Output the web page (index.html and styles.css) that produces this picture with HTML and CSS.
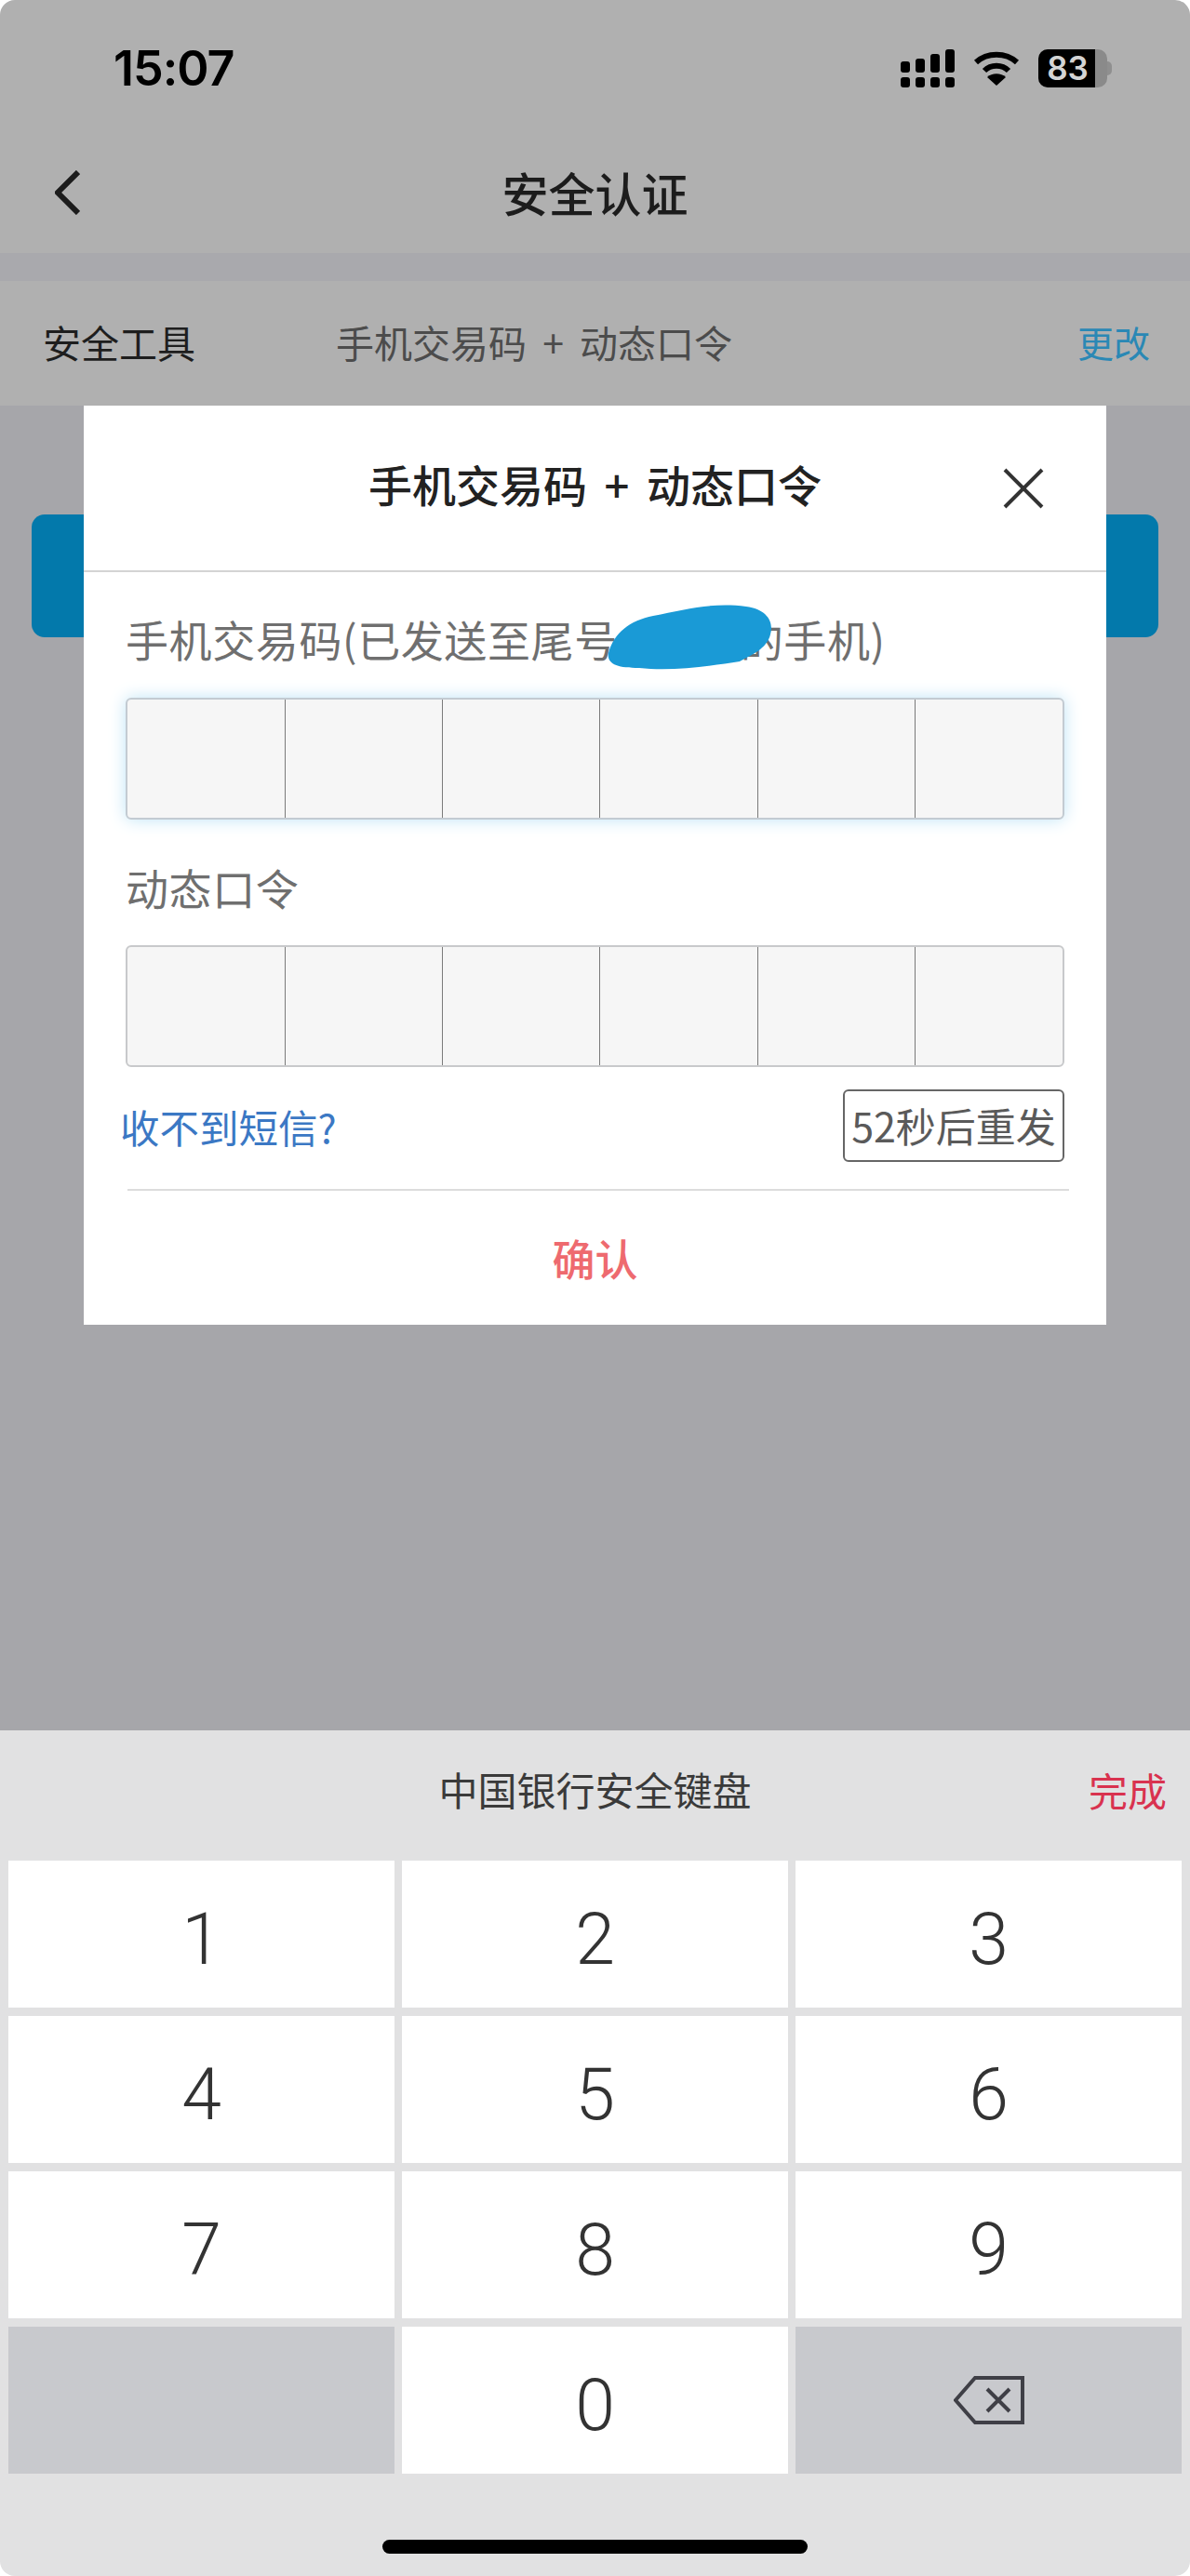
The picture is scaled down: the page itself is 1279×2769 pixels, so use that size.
FILE: index.html
```html
<!DOCTYPE html>
<html lang="zh-CN">
<head>
    <meta charset="UTF-8">
    <title>安全认证</title>
    <link rel="stylesheet" href="styles.css">
</head>
<body>

    <div class="phone">
        <div class="top">
            <div class="status">
                <span class="time">15:07</span>
                <div class="status-icons">
                    <svg class="signal" width="58" height="41" viewBox="0 0 58 41">
                        <rect x="0" y="13" width="10" height="12" rx="3"/>
                        <rect x="16" y="10" width="10" height="15" rx="3"/>
                        <rect x="32" y="5" width="10" height="20" rx="3"/>
                        <rect x="48" y="0" width="10" height="25" rx="3"/>
                        <rect x="0" y="30" width="10" height="11" rx="3"/>
                        <rect x="16" y="30" width="10" height="11" rx="3"/>
                        <rect x="32" y="30" width="10" height="11" rx="3"/>
                        <rect x="48" y="30" width="10" height="11" rx="3"/>
                    </svg>
                    <svg class="wifi" width="50" height="38" viewBox="0 0 50 38">
                        <path d="M3 13 C15 2 35 2 47 13" fill="none" stroke="#000" stroke-width="6"/>
                        <path d="M12 22 C19 15 31 15 38 22" fill="none" stroke="#000" stroke-width="6"/>
                        <path d="M15 29 C20 24 30 24 35 29 L25 38 Z"/>
                    </svg>
                    <div class="battery">
                        <span class="battery-fill">83</span>
                        <span class="battery-nub"></span>
                    </div>
                </div>
            </div>
            <div class="nav">
                <svg class="back" width="27" height="48" viewBox="0 0 27 48">
                    <path d="M25 2 L3 24 L25 46" fill="none" stroke="#1c1c1c" stroke-width="6"/>
                </svg>
                <h1>安全认证</h1>
            </div>
        </div>

        <div class="band"></div>

        <div class="tool-row">
            <span class="tool-name">安全工具</span>
            <span class="tool-value">手机交易码 + 动态口令</span>
            <span class="tool-change">更改</span>
        </div>

        <div class="content">
            <div class="blue-btn"></div>
        </div>

        <div class="modal">
            <div class="modal-head">
                <h2>手机交易码 + 动态口令</h2>
                <svg class="close" width="44" height="44" viewBox="0 0 44 44">
                    <path d="M2 2 L42 42 M42 2 L2 42" fill="none" stroke="#333" stroke-width="4"/>
                </svg>
            </div>
            <div class="modal-body">
                <label class="field-label first">手机交易码(已发送至尾号<span class="masked"></span>的手机)</label>
                <div class="code-box active">
                    <span></span><span></span><span></span><span></span><span></span><span></span>
                </div>
                <label class="field-label second">动态口令</label>
                <div class="code-box">
                    <span></span><span></span><span></span><span></span><span></span><span></span>
                </div>
                <div class="actions">
                    <span class="no-sms">收不到短信?</span>
                    <span class="resend">52秒后重发</span>
                </div>
                <div class="divider"></div>
            </div>
            <div class="confirm">确认</div>
            <svg class="blob" width="180" height="70" viewBox="0 0 180 70">
                <path d="M2 52 C8 30 25 17 50 12 C85 5 115 -3 150 2 C172 5 180 18 176 32 C172 48 155 54 143 61 C110 66 70 72 35 68 C12 68 0 64 2 52 Z" fill="#1a9ad6"/>
            </svg>
        </div>

        <div class="keyboard">
            <div class="kb-head">
                <span class="kb-title">中国银行安全键盘</span>
                <span class="kb-done">完成</span>
            </div>
            <div class="keys">
                <div class="key">1</div>
                <div class="key">2</div>
                <div class="key">3</div>
                <div class="key">4</div>
                <div class="key">5</div>
                <div class="key">6</div>
                <div class="key">7</div>
                <div class="key">8</div>
                <div class="key">9</div>
                <div class="key grey"></div>
                <div class="key">0</div>
                <div class="key grey">
                    <svg width="76" height="52" viewBox="0 0 76 52">
                        <path d="M2 26 L23 2 H74 V50 H23 Z" fill="none" stroke="#3f3f46" stroke-width="4"/>
                        <path d="M36 14 L60 38 M60 14 L36 38" fill="none" stroke="#3f3f46" stroke-width="4"/>
                    </svg>
                </div>
            </div>
            <div class="home-bar"></div>
        </div>
    </div>

</body>
</html>
```

FILE: styles.css
```css
/* Estilos generales */
body {
    margin: 0;
    background-color: #fff;
    font-family: "Noto Sans CJK SC", "Noto Sans", sans-serif;
}

h1, h2 {
    margin: 0;
    font-weight: 500;
}

.phone {
    position: relative;
    width: 1279px;
    height: 2769px;
    display: flex;
    flex-direction: column;
    border-radius: 16px;
    overflow: hidden;
}

/* Barra de estado y navegacion */
.top {
    background-color: #b0b0b0;
}

.status {
    height: 146px;
    display: flex;
    align-items: center;
    justify-content: space-between;
    padding: 0 89px 0 122px;
    box-sizing: border-box;
}

.time {
    font-family: Inter, sans-serif;
    font-size: 52px;
    font-weight: 600;
    letter-spacing: -1px;
    color: #000;
}

.status-icons {
    display: flex;
    align-items: center;
}

.signal {
    margin-right: 20px;
}

.wifi {
    margin-right: 20px;
}

.battery {
    position: relative;
    width: 74px;
    height: 41px;
    background-color: #8a8a8a;
    border-radius: 10px;
}

.battery-fill {
    display: block;
    width: 61px;
    height: 41px;
    padding-left: 2px;
    box-sizing: border-box;
    background-color: #000;
    border-radius: 10px 0 0 10px;
    color: #d4d4d4;
    font-family: Inter, sans-serif;
    font-size: 35px;
    font-weight: 600;
    line-height: 41px;
    text-align: center;
}

.battery-nub {
    position: absolute;
    left: 74px;
    top: 13px;
    width: 5px;
    height: 15px;
    background-color: #8f8f8f;
    border-radius: 0 6px 6px 0;
}

.nav {
    position: relative;
    height: 126px;
    padding-bottom: 6px;
    box-sizing: border-box;
    display: flex;
    align-items: center;
    justify-content: center;
}

.back {
    position: absolute;
    left: 59px;
    top: 37px;
}

.nav h1 {
    font-size: 50px;
    color: #1c1c1c;
}

.band {
    height: 30px;
    background-color: #a9a9ad;
}

.tool-row {
    height: 134px;
    display: flex;
    align-items: center;
    padding: 0 43px 4px 46px;
    box-sizing: border-box;
    background-color: #b0b0b0;
    font-size: 41px;
}

.tool-name {
    width: 315px;
    color: #1e1e1e;
}

.tool-value {
    flex: 1;
    color: #4c4c4c;
    word-spacing: 8px;
}

.tool-change {
    font-size: 39px;
    color: #2a88b5;
}

.content {
    flex: 1;
    padding: 117px 34px 0;
    background-color: #a6a6aa;
}

.blue-btn {
    height: 132px;
    background-color: #0379ab;
    border-radius: 14px;
}

/* Modal */
.modal {
    position: absolute;
    left: 90px;
    top: 436px;
    width: 1099px;
    height: 988px;
    display: flex;
    flex-direction: column;
    background-color: #fff;
}

.modal-head {
    position: relative;
    height: 179px;
    flex-shrink: 0;
    display: flex;
    align-items: center;
    justify-content: center;
    border-bottom: 2px solid #d4d4d4;
    padding-bottom: 10px;
    box-sizing: border-box;
}

.modal-head h2 {
    font-size: 47px;
    color: #222;
    word-spacing: 8px;
}

.close {
    position: absolute;
    right: 67px;
    top: 67px;
}

.modal-body {
    padding: 0 45px 0 45px;
}

.field-label {
    display: block;
    font-size: 46px;
    line-height: 60px;
    letter-spacing: 0.6px;
    color: #6f6f6f;
}

.field-label.first {
    margin-top: 41px;
}

.field-label.second {
    margin-top: 42px;
}

.masked {
    display: inline-block;
    width: 132px;
}

.code-box {
    height: 131px;
    margin-top: 33px;
    display: grid;
    grid-template-columns: 170px 169px 169px 170px 169px 1fr;
    box-sizing: border-box;
    background-color: #f6f6f6;
    border: 2px solid #c8c9cb;
    border-radius: 6px;
}

.code-box.active {
    margin-top: 34px;
    border-color: #c3cbd2;
    box-shadow: 0 0 18px #bfe4f6;
}

.code-box span {
    border-right: 1px solid #7a7a7a;
}

.code-box span:last-child {
    border-right: none;
}

.actions {
    margin-top: 24px;
    height: 78px;
    display: flex;
    align-items: center;
    justify-content: space-between;
}

.no-sms {
    margin-left: -6px;
    font-size: 42.5px;
    color: #3b78c4;
}

.resend {
    width: 238px;
    height: 78px;
    box-sizing: border-box;
    border: 2px solid #666;
    border-radius: 6px;
    font-size: 43px;
    line-height: 72px;
    text-align: center;
    color: #5a5a5a;
}

.divider {
    height: 2px;
    margin: 29px -5px 0 2px;
    background-color: #dcdcdc;
}

.confirm {
    flex: 1;
    display: flex;
    align-items: center;
    justify-content: center;
    padding-bottom: 3px;
    font-size: 46px;
    font-weight: 500;
    color: #ee6a6f;
}

.blob {
    position: absolute;
    left: 562px;
    top: 214px;
}

/* Teclado */
.keyboard {
    height: 909px;
    background-color: #e1e1e2;
}

.kb-head {
    position: relative;
    height: 140px;
    display: flex;
    align-items: center;
    justify-content: center;
    padding-bottom: 15px;
    box-sizing: border-box;
}

.kb-title {
    font-size: 42px;
    color: #3a3a3a;
}

.kb-done {
    position: absolute;
    right: 25px;
    top: 33px;
    font-size: 42px;
    color: #d9324f;
}

.keys {
    display: grid;
    grid-template-columns: repeat(3, 415px);
    grid-auto-rows: 158px;
    gap: 9px 8px;
    padding: 0 9px;
}

.key {
    display: flex;
    align-items: center;
    justify-content: center;
    padding-top: 12px;
    box-sizing: border-box;
    background-color: #fff;
    font-family: Roboto, sans-serif;
    font-size: 77px;
    font-weight: 300;
    color: #333;
}

.key.grey {
    padding-top: 0;
    background-color: #c8c9cd;
}

.home-bar {
    width: 457px;
    height: 15px;
    margin: 71px auto 0;
    background-color: #000;
    border-radius: 8px;
}
```
